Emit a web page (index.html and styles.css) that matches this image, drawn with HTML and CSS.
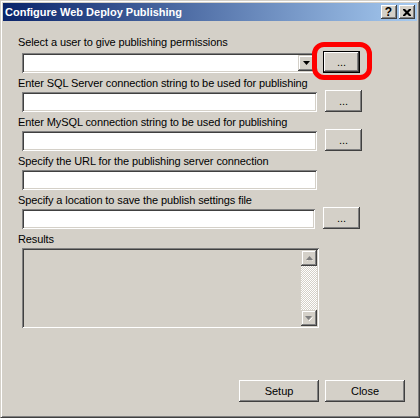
FILE: index.html
```html
<!DOCTYPE html>
<html>
<head>
<meta charset="utf-8">
<link rel="stylesheet" href="styles.css">
</head>
<body>
<div class="window">
  <div class="titlebar">
    <span class="title">Configure Web Deploy Publishing</span>
    <div class="tb-buttons">
      <span class="tb-btn">?</span>
      <span class="tb-btn"><svg width="8" height="7" viewBox="0 0 8 7"><path d="M0 0h2l2 2 2-2h2v1L5.5 3.5 8 6v1H6L4 5 2 7H0V6l2.5-2.5L0 1z" fill="#000"/></svg></span>
    </div>
  </div>
  <div class="content">
    <div class="fields">
      <div class="field first">
        <div class="label">Select a user to give publishing permissions</div>
        <div class="row">
          <div class="combo">
            <span class="combo-btn"><svg width="7" height="4" viewBox="0 0 7 4"><path d="M0 0h7L3.5 4z" fill="#000"/></svg></span>
          </div>
          <span class="btn-wrap">
            <button class="btn default">...</button>
            <span class="highlight"></span>
          </span>
        </div>
      </div>
      <div class="field">
        <div class="label">Enter SQL Server connection string to be used for publishing</div>
        <div class="row">
          <div class="input"></div>
          <button class="btn">...</button>
        </div>
      </div>
      <div class="field">
        <div class="label">Enter MySQL connection string to be used for publishing</div>
        <div class="row">
          <div class="input"></div>
          <button class="btn">...</button>
        </div>
      </div>
      <div class="field">
        <div class="label">Specify the URL for the publishing server connection</div>
        <div class="row">
          <div class="input"></div>
        </div>
      </div>
      <div class="field">
        <div class="label">Specify a location to save the publish settings file</div>
        <div class="row">
          <div class="input narrow"></div>
          <button class="btn">...</button>
        </div>
      </div>
    </div>
    <div class="results">
      <div class="label">Results</div>
      <div class="resultbox">
        <div class="scrollbar">
          <span class="sb-btn"><svg width="7" height="5" viewBox="0 0 7 5"><path d="M1.5 4.5L4 2l2.5 2.5" fill="none" stroke="#fff"/><path d="M0 4h7L3.5 0z" fill="#808080"/></svg></span>
          <span class="sb-track"></span>
          <span class="sb-btn"><svg width="8" height="5" viewBox="0 0 8 5"><path d="M4 5l3.5-3.5" fill="none" stroke="#fff"/><path d="M0 0h7L3.5 4z" fill="#808080"/></svg></span>
        </div>
      </div>
    </div>
    <div class="footer">
      <button class="btn wide">Setup</button>
      <button class="btn wide">Close</button>
    </div>
  </div>
</div>
</body>
</html>
```
FILE: styles.css
```css
* { box-sizing: border-box; }
body {
  margin: 0;
  font-family: "Liberation Sans", Arial, sans-serif;
  font-size: 11px;
  color: #000;
}
.window {
  width: 420px;
  height: 418px;
  background: #d4d0c8;
  border: 1px solid;
  border-color: #d4d0c8 #404040 #404040 #d4d0c8;
  box-shadow: inset 1px 1px #fff, inset -1px -1px #808080;
  padding: 2px;
  display: flex;
  flex-direction: column;
}
.titlebar {
  height: 18px;
  flex: none;
  background: linear-gradient(to right, #0a246a, #a6caf0);
  display: flex;
  align-items: center;
  justify-content: space-between;
  padding: 0 2px;
}
.title {
  color: #fff;
  font-weight: bold;
  font-size: 11px;
  line-height: 13px;
  white-space: nowrap;
}
.tb-buttons {
  display: flex;
  gap: 2px;
}
.tb-btn {
  width: 16px;
  height: 14px;
  background: #d4d0c8;
  box-shadow: inset -1px -1px #404040, inset 1px 1px #fff, inset -2px -2px #808080;
  display: flex;
  align-items: center;
  justify-content: center;
  font-weight: bold;
  font-size: 12px;
  line-height: 14px;
  color: #000;
  padding-right: 1px;
}
.content {
  flex: 1;
  display: flex;
  flex-direction: column;
  padding: 15px 12px 13px 15px;
}
.fields {
  display: flex;
  flex-direction: column;
  gap: 4px;
}
.label {
  height: 13px;
  line-height: 13px;
  white-space: nowrap;
  color: #000;
  letter-spacing: -0.1px;
}
.row {
  display: flex;
  align-items: flex-end;
  height: 22px;
  padding-left: 4px;
}
.field.first .row {
  margin-top: 2px;
}
.input, .combo, .resultbox {
  box-shadow: inset 1px 1px #808080, inset -1px -1px #fff, inset 2px 2px #404040, inset -2px -2px #d4d0c8;
}
.input {
  width: 295px;
  height: 20px;
  background: #fff;
}
.input.narrow {
  width: 293px;
}
.combo {
  width: 294px;
  height: 20px;
  background: #fff;
  display: flex;
  justify-content: flex-end;
  padding: 2px;
}
.combo-btn, .sb-btn {
  width: 16px;
  height: 16px;
  background: #d4d0c8;
  box-shadow: inset -1px -1px #404040, inset 1px 1px #d4d0c8, inset -2px -2px #808080, inset 2px 2px #fff;
  display: flex;
  align-items: center;
  justify-content: center;
}
.btn {
  width: 37px;
  height: 22px;
  margin: 0 0 0 8px;
  padding: 0;
  border: none;
  background: #d4d0c8;
  font: 11px "Liberation Sans", Arial, sans-serif;
  color: #000;
  box-shadow: inset -1px -1px #404040, inset 1px 1px #fff, inset -2px -2px #808080;
}
.btn-wrap {
  position: relative;
  display: flex;
  margin-left: 7px;
}
.btn-wrap .btn {
  margin: 0;
}
.btn.default {
  box-shadow: inset 0 0 0 1px #000, inset -2px -2px #404040, inset 2px 2px #fff, inset -3px -3px #808080;
}
.highlight {
  position: absolute;
  left: -11px;
  top: -9px;
  width: 60px;
  height: 38px;
  border: 5px solid #f00;
  border-radius: 12px;
  pointer-events: none;
}
.results {
  margin-top: 4px;
}
.resultbox {
  margin: 2px 0 0 4px;
  width: 297px;
  height: 80px;
  background: #d4d0c8;
  padding: 2px;
  display: flex;
  justify-content: flex-end;
}
.scrollbar {
  width: 16px;
  display: flex;
  flex-direction: column;
}
.sb-track {
  flex: 1;
  background: conic-gradient(#fff 25%, #d4d0c8 0 50%, #fff 0 75%, #d4d0c8 0);
  background-size: 2px 2px;
}
.footer {
  margin-top: auto;
  display: flex;
  justify-content: flex-end;
  gap: 6px;
}
.btn.wide {
  width: 80px;
  margin: 0;
}
```
